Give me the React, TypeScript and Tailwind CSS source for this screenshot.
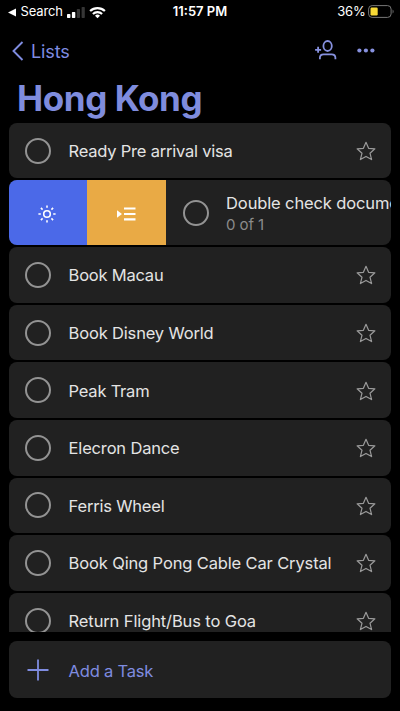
import React from "react";

function Circle() {
  return <span className="block h-[26px] w-[26px] shrink-0 rounded-full border-2 border-[#939393]" />;
}

function Star() {
  return (
    <svg className="mt-px h-5 w-5 shrink-0" viewBox="0 0 20 20" fill="none" stroke="#9a9a9a" strokeWidth="1.2" strokeLinejoin="round">
      <path d="M10 1.3 12.6 7.3 18.9 7.8 14 12.2 15.6 18.6 10 15.4 4.4 18.6 6 12.2 1.1 7.8 7.4 7.3Z" />
    </svg>
  );
}

function Task({ title, spacing, height = "h-[55.6px]" }: { title: string; spacing: string; height?: string }) {
  return (
    <div className={"flex shrink-0 items-center rounded-[8px] bg-[#212121] pl-4 pr-[15px] " + height}>
      <Circle />
      <span className={"ml-[18px] mt-px flex-1 whitespace-nowrap text-[16.5px] leading-6 text-[#e4e4e4] " + spacing}>{title}</span>
      <Star />
    </div>
  );
}

function SwipedTask() {
  return (
    <div className="flex h-[65px] shrink-0 overflow-hidden rounded-[8px] bg-[#212121]">
      <div className="flex w-[78.5px] shrink-0 items-center justify-center bg-[#4b69e8]">
        <svg className="mr-px mt-[3px] h-[18px] w-[18px]" viewBox="0 0 18 18" fill="none" stroke="#fff" strokeWidth="1.6">
          <circle cx="9" cy="9" r="3.3" />
          <path d="M9 .4v2.4M9 15.2v2.4M.4 9h2.4M15.2 9h2.4M2.9 2.9l1.7 1.7M13.4 13.4l1.7 1.7M2.9 15.1l1.7-1.7M13.4 4.6l1.7-1.7" />
        </svg>
      </div>
      <div className="flex w-[79px] shrink-0 items-center justify-center bg-[#e9aa45]">
        <svg className="mr-px mt-[3px] h-[14px] w-[19px]" viewBox="0 0 19 14">
          <path d="M0 3.2 5 7 0 10.8Z" fill="#fff" />
          <path d="M7 1.5h11.5M7 7h11.5M7 12.3h11.5" stroke="#fff" strokeWidth="2.2" />
        </svg>
      </div>
      <div className="flex min-w-0 flex-1 items-center pl-[17px]">
        <Circle />
        <div className="ml-[17px] mt-[2px] whitespace-nowrap">
          <div className="text-[16.5px] leading-[22px] tracking-[-0.13px] text-[#e4e4e4]">Double check documents</div>
          <div className="text-[15px] leading-[22px] tracking-[-0.1px] text-[#8b8b8b]">0 of 1</div>
        </div>
      </div>
    </div>
  );
}

export default function App() {
  return (
    <div className="flex h-[711px] w-[400px] flex-col overflow-hidden bg-black font-['Inter','Liberation_Sans',sans-serif]">
      <div className="grid h-[22px] shrink-0 grid-cols-3 items-center pt-[2px] text-white">
        <div className="flex items-center pl-2">
          <svg className="h-[9px] w-[9px]" viewBox="0 0 9 9" fill="#fff"><path d="M0 4.5 8 .5v8Z" /></svg>
          <span className="ml-[3.5px] text-[13px] tracking-[-0.15px]">Search</span>
          <svg className="ml-1 h-[13px] w-[18px] shrink-0" viewBox="0 0 18 13">
            <rect y="8" width="3.4" height="4" rx=".7" fill="#fff" />
            <rect x="4.9" y="6" width="3.4" height="6" rx=".7" fill="#fff" />
            <rect x="9.8" y="3" width="3.2" height="9" rx=".7" fill="#363636" />
            <rect x="14.6" y="1" width="3.2" height="11" rx=".7" fill="#363636" />
          </svg>
          <svg className="ml-1 h-[13px] w-[17px] shrink-0" viewBox="0 0 17 13" fill="none" stroke="#fff" strokeWidth="2.1">
            <path d="M1.1 5.1a10.6 10.6 0 0 1 14.8 0M3.9 8a6.6 6.6 0 0 1 9.2 0" />
            <path d="M8.5 12.2 6 9.8a3.6 3.6 0 0 1 5 0Z" fill="#fff" stroke="none" />
          </svg>
        </div>
        <div className="text-center text-[13px] font-semibold">11:57 PM</div>
        <div className="flex items-center justify-end pr-[5.5px]">
          <span className="text-[13px] tracking-[-0.2px]">36%</span>
          <svg className="-mt-px ml-[3px] h-[13px] w-[26px]" viewBox="0 0 26 13">
            <rect x=".6" y=".6" width="22.5" height="11.8" rx="3.5" fill="none" stroke="#777" strokeWidth="1" />
            <rect x="2.5" y="2.5" width="7.2" height="8" rx="1.2" fill="#f7d936" />
            <path d="M24.6 4.5c1.3.6 1.3 3.4 0 4Z" fill="#777" />
          </svg>
        </div>
      </div>
      <div className="flex h-[58px] shrink-0 items-center pl-3 pr-[25.5px]">
        <svg className="h-5 w-3" viewBox="0 0 12 20" fill="none" stroke="#7f8ce0" strokeWidth="1.9"><path d="M10.5 1 1.5 10l9 9" /></svg>
        <span className="ml-[7px] mt-px flex-1 text-[18px] tracking-[-0.1px] text-[#7f8ce0]">Lists</span>
        <svg className="-mt-[2px] h-5 w-[22px]" viewBox="0 0 22 20" fill="none" stroke="#8791df" strokeWidth="1.8">
          <ellipse cx="12.6" cy="6" rx="4.2" ry="5" />
          <path d="M4.9 19.2v-1.4c0-2.1 1.5-3.4 3.7-3.4h8c2.2 0 3.8 1.3 3.8 3.4v1.4M3.1 6.8v6M.1 9.8h6" />
        </svg>
        <svg className="-mt-px ml-5 h-[5px] w-[18px]" viewBox="0 0 18 5" fill="#8791df">
          <circle cx="2.4" cy="2.5" r="2.1" /><circle cx="8.9" cy="2.5" r="2.1" /><circle cx="15.4" cy="2.5" r="2.1" />
        </svg>
      </div>
      <h1 className="h-[43px] shrink-0 whitespace-nowrap pl-[17px] text-[35px] font-bold leading-[36px] tracking-[-0.42px] text-[#7f8cdd]">Hong Kong</h1>
      <div className="ml-[8.6px] flex h-[509px] w-[382.6px] shrink-0 flex-col gap-[2px] overflow-hidden">
        <Task title="Ready Pre arrival visa" spacing="tracking-[-0.22px]" height="h-[55.2px]" />
        <SwipedTask />
        <Task title="Book Macau" spacing="tracking-[-0.22px]" />
        <Task title="Book Disney World" spacing="tracking-[-0.17px]" />
        <Task title="Peak Tram" spacing="tracking-[-0.23px]" />
        <Task title="Elecron Dance" spacing="tracking-[-0.17px]" />
        <Task title="Ferris Wheel" spacing="tracking-[-0.2px]" />
        <Task title="Book Qing Pong Cable Car Crystal" spacing="tracking-[-0.14px]" />
        <Task title="Return Flight/Bus to Goa" spacing="tracking-[-0.12px]" />
      </div>
      <div className="ml-[8.6px] mt-[9px] flex h-[57px] w-[382.6px] shrink-0 items-center rounded-[8px] bg-[#212121] pl-[18px] text-[#7f8ce0]">
        <svg className="h-[22px] w-[22px]" viewBox="0 0 22 22" stroke="currentColor" strokeWidth="1.8"><path d="M11 .5v21M.5 11h21" /></svg>
        <span className="ml-5 mt-[3px] text-[16.5px] tracking-[-0.22px]">Add a Task</span>
      </div>
    </div>
  );
}
